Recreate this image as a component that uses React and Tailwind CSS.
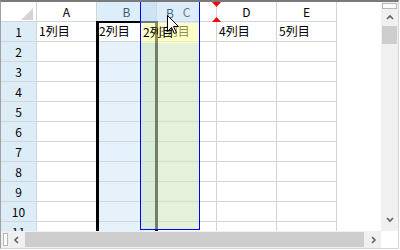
import React from "react";

const COLS = ["A", "B", "C", "D", "E"];
const ROWS = [1, 2, 3, 4, 5, 6, 7, 8, 9, 10, 11];
const FIRST = ["1列目", "2列目", "3列目", "4列目", "5列目"];

const font = { fontFamily: '"Noto Sans CJK JP", "Liberation Sans", sans-serif' };

const Chevron = ({ dir }) => {
  const pts = {
    up: "1,5 4,2 7,5",
    down: "1,2 4,5 7,2",
    left: "5,1 2,4 5,7",
    right: "3,1 6,4 3,7",
  }[dir];
  return (
    <svg width="8" height="8" viewBox="0 0 8 8">
      <polyline points={pts} fill="none" stroke="#606060" strokeWidth="1.6" />
    </svg>
  );
};

const App = () => {
  return (
    <div className="w-[400px] h-[250px] bg-white" style={font}>
      <div className="relative w-[399px] h-[249px] flex flex-col border-t-2 border-t-[#7a7a7a] border-l border-l-[#a0a0a0] border-r border-r-[#d4d4d4] border-b border-b-[#d4d4d4] overflow-hidden">
        <div className="flex h-[229px]">
          {/* grid */}
          <div className="w-[380px] h-[229px] overflow-hidden bg-white">
            {/* header row */}
            <div className="flex h-[20px]">
              <div className="relative w-[36px] h-[20px] border-r border-b border-[#d4d4d4] bg-white">
                <svg className="absolute left-[20px] top-[6px]" width="13" height="12" viewBox="0 0 13 12">
                  <polygon points="12,0 12,12 0,12" fill="#d4d4d4" />
                </svg>
              </div>
              {COLS.map((c) => (
                <div key={c}
                  className={`w-[60px] h-[20px] border-r border-b border-[#d4d4d4] flex items-center justify-center text-[12px] leading-none ${c === "B" ? "bg-[#dceefa] text-[#3f5c78]" : "bg-white text-black"}`}>
                  {c}
                </div>
              ))}
            </div>
            {/* data rows */}
            {ROWS.map((r) => (
              <div key={r} className="flex h-[20px]">
                <div className="w-[36px] h-[20px] border-r border-b border-[#d4d4d4] bg-[#ddedf8] flex items-center justify-center text-[12px] leading-none text-black">
                  {r}
                </div>
                {COLS.map((c, i) => (
                  <div key={c}
                    className={`w-[60px] h-[20px] border-r border-b border-[#d4d4d4] px-[2px] text-[12px] leading-[18px] text-black whitespace-nowrap ${c === "B" && r !== 1 ? "bg-[#e5f1fb]" : "bg-white"}`}>
                    {r === 1 ? FIRST[i] : ""}
                  </div>
                ))}
              </div>
            ))}
          </div>

          {/* vertical scrollbar */}
          <div className="w-[17px] h-[229px] bg-[#f0f0f0] flex flex-col items-center">
            <div className="w-[15px] h-[6px] mt-[1px] border border-[#b8b8b8] bg-[#fafafa]" />
            <div className="h-[16px] flex items-center justify-center mt-[1px]">
              <Chevron dir="up" />
            </div>
            <div className="w-[15px] h-[18px] bg-[#cdcdcd]" />
            <div className="flex-1" />
            <div className="h-[17px] flex items-center justify-center mb-[3px]">
              <Chevron dir="down" />
            </div>
          </div>
        </div>

        {/* horizontal scrollbar */}
        <div className="flex h-[17px]">
          <div className="w-[380px] h-[17px] bg-[#f0f0f0] flex items-center">
            <div className="w-[5px] h-[13px] ml-[2px] border border-[#b8b8b8] bg-[#fafafa]" />
            <div className="w-[17px] flex items-center justify-center">
              <Chevron dir="left" />
            </div>
            <div className="w-[339px] h-[15px] bg-[#cdcdcd]" />
            <div className="w-[17px] flex items-center justify-center">
              <Chevron dir="right" />
            </div>
          </div>
          <div className="w-[17px] h-[17px] bg-white" />
        </div>

        {/* selection border of column B */}
        <div className="absolute left-[95px] top-[19px] w-[62px] h-[210px] border-l-[3px] border-r-[3px] border-t-2 border-black pointer-events-none" />

        {/* drag ghost */}
        <div className="absolute left-[139px] top-[-1px] w-[60px] h-[229px] border border-[#0000ff] flex flex-col pointer-events-none">
          <div className="h-[21px] bg-[rgba(191,220,242,0.55)] flex items-center justify-center text-[12px] leading-none text-[#4a6a86]">
            B
          </div>
          <div className="h-[20px] bg-[rgba(255,255,155,0.55)] px-[2px] text-[12px] leading-[18px] text-black whitespace-nowrap">
            2列目
          </div>
          <div className="flex-1 bg-[rgba(208,229,190,0.55)]" />
        </div>

        {/* drop markers */}
        <svg className="absolute left-[211px] top-0" width="9" height="5" viewBox="0 0 9 5">
          <polygon points="0,0 9,0 4.5,5" fill="#ff0000" />
        </svg>
        <svg className="absolute left-[211px] top-[15px]" width="9" height="5" viewBox="0 0 9 5">
          <polygon points="4.5,0 9,5 0,5" fill="#ff0000" />
        </svg>

        {/* mouse cursor */}
        <svg className="absolute left-[166px] top-[13px]" width="13" height="20" viewBox="0 0 13 20">
          <path d="M0.5 0.5 L0.5 16.5 L4.5 12.5 L7.5 18.5 L9.5 17.5 L6.5 11.5 L11.5 11.5 Z"
            fill="#ffffff" stroke="#000000" strokeWidth="1" strokeLinejoin="miter" />
        </svg>
      </div>
    </div>
  );
};

export default App;
